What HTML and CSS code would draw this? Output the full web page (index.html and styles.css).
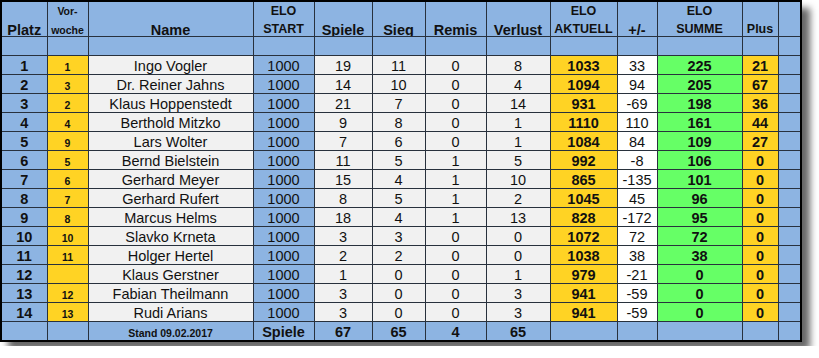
FILE: index.html
```html
<!DOCTYPE html>
<html lang="de">
<head>
<meta charset="utf-8">
<title>ELO Tabelle</title>
<link rel="stylesheet" href="styles.css">
</head>
<body>
<div class="frame">
<table class="elo">
<colgroup>
<col class="c-platz"><col class="c-vor"><col class="c-name"><col class="c-start"><col class="c-spiele"><col class="c-sieg"><col class="c-remis"><col class="c-verlust"><col class="c-akt"><col class="c-pm"><col class="c-summe"><col class="c-plus"><col class="c-extra">
</colgroup>
<thead>
<tr class="head">
<th class="b"><span class="l1"></span><span class="l2 big">Platz</span></th>
<th class="b"><span class="l1 tiny">Vor-</span><span class="l2 tiny">woche</span></th>
<th class="b"><span class="l1"></span><span class="l2 big">Name</span></th>
<th class="b"><span class="l1 small">ELO</span><span class="l2 small">START</span></th>
<th class="b"><span class="l1"></span><span class="l2 big">Spiele</span></th>
<th class="b"><span class="l1"></span><span class="l2 big">Sieg</span></th>
<th class="b"><span class="l1"></span><span class="l2 big">Remis</span></th>
<th class="b"><span class="l1"></span><span class="l2 big">Verlust</span></th>
<th class="b"><span class="l1 small">ELO</span><span class="l2 small">AKTUELL</span></th>
<th class="b"><span class="l1"></span><span class="l2 big">+/-</span></th>
<th class="b"><span class="l1 small">ELO</span><span class="l2 small">SUMME</span></th>
<th class="b"><span class="l1"></span><span class="l2 small">Plus</span></th>
<th class="b"><span class="l1"></span><span class="l2"></span></th>
</tr>
<tr class="spacer">
<td class="b"></td><td class="b"></td><td class="b"></td><td class="b"></td><td class="b"></td><td class="b"></td><td class="b"></td><td class="b"></td><td class="b"></td><td class="b"></td><td class="b"></td><td class="b"></td><td class="b"></td>
</tr>
</thead>
<tbody>
<tr><td class="b bold">1</td><td class="y vor">1</td><td class="g">Ingo Vogler</td><td class="b">1000</td><td class="g">19</td><td class="g">11</td><td class="g">0</td><td class="g">8</td><td class="y bold">1033</td><td class="w">33</td><td class="gr bold">225</td><td class="y bold">21</td><td class="b"></td></tr>
<tr><td class="b bold">2</td><td class="y vor">3</td><td class="g">Dr. Reiner Jahns</td><td class="b">1000</td><td class="g">14</td><td class="g">10</td><td class="g">0</td><td class="g">4</td><td class="y bold">1094</td><td class="w">94</td><td class="gr bold">205</td><td class="y bold">67</td><td class="b"></td></tr>
<tr><td class="b bold">3</td><td class="y vor">2</td><td class="g">Klaus Hoppenstedt</td><td class="b">1000</td><td class="g">21</td><td class="g">7</td><td class="g">0</td><td class="g">14</td><td class="y bold">931</td><td class="w">-69</td><td class="gr bold">198</td><td class="y bold">36</td><td class="b"></td></tr>
<tr><td class="b bold">4</td><td class="y vor">4</td><td class="g">Berthold Mitzko</td><td class="b">1000</td><td class="g">9</td><td class="g">8</td><td class="g">0</td><td class="g">1</td><td class="y bold">1110</td><td class="w">110</td><td class="gr bold">161</td><td class="y bold">44</td><td class="b"></td></tr>
<tr><td class="b bold">5</td><td class="y vor">9</td><td class="g">Lars Wolter</td><td class="b">1000</td><td class="g">7</td><td class="g">6</td><td class="g">0</td><td class="g">1</td><td class="y bold">1084</td><td class="w">84</td><td class="gr bold">109</td><td class="y bold">27</td><td class="b"></td></tr>
<tr><td class="b bold">6</td><td class="y vor">5</td><td class="g">Bernd Bielstein</td><td class="b">1000</td><td class="g">11</td><td class="g">5</td><td class="g">1</td><td class="g">5</td><td class="y bold">992</td><td class="w">-8</td><td class="gr bold">106</td><td class="y bold">0</td><td class="b"></td></tr>
<tr><td class="b bold">7</td><td class="y vor">6</td><td class="g">Gerhard Meyer</td><td class="b">1000</td><td class="g">15</td><td class="g">4</td><td class="g">1</td><td class="g">10</td><td class="y bold">865</td><td class="w">-135</td><td class="gr bold">101</td><td class="y bold">0</td><td class="b"></td></tr>
<tr><td class="b bold">8</td><td class="y vor">7</td><td class="g">Gerhard Rufert</td><td class="b">1000</td><td class="g">8</td><td class="g">5</td><td class="g">1</td><td class="g">2</td><td class="y bold">1045</td><td class="w">45</td><td class="gr bold">96</td><td class="y bold">0</td><td class="b"></td></tr>
<tr><td class="b bold">9</td><td class="y vor">8</td><td class="g">Marcus Helms</td><td class="b">1000</td><td class="g">18</td><td class="g">4</td><td class="g">1</td><td class="g">13</td><td class="y bold">828</td><td class="w">-172</td><td class="gr bold">95</td><td class="y bold">0</td><td class="b"></td></tr>
<tr><td class="b bold">10</td><td class="y vor">10</td><td class="g">Slavko Krneta</td><td class="b">1000</td><td class="g">3</td><td class="g">3</td><td class="g">0</td><td class="g">0</td><td class="y bold">1072</td><td class="w">72</td><td class="gr bold">72</td><td class="y bold">0</td><td class="b"></td></tr>
<tr><td class="b bold">11</td><td class="y vor">11</td><td class="g">Holger Hertel</td><td class="b">1000</td><td class="g">2</td><td class="g">2</td><td class="g">0</td><td class="g">0</td><td class="y bold">1038</td><td class="w">38</td><td class="gr bold">38</td><td class="y bold">0</td><td class="b"></td></tr>
<tr><td class="b bold">12</td><td class="y vor"></td><td class="g">Klaus Gerstner</td><td class="b">1000</td><td class="g">1</td><td class="g">0</td><td class="g">0</td><td class="g">1</td><td class="y bold">979</td><td class="w">-21</td><td class="gr bold">0</td><td class="y bold">0</td><td class="b"></td></tr>
<tr><td class="b bold">13</td><td class="y vor">12</td><td class="g">Fabian Theilmann</td><td class="b">1000</td><td class="g">3</td><td class="g">0</td><td class="g">0</td><td class="g">3</td><td class="y bold">941</td><td class="w">-59</td><td class="gr bold">0</td><td class="y bold">0</td><td class="b"></td></tr>
<tr><td class="b bold">14</td><td class="y vor">13</td><td class="g">Rudi Arians</td><td class="b">1000</td><td class="g">3</td><td class="g">0</td><td class="g">0</td><td class="g">3</td><td class="y bold">941</td><td class="w">-59</td><td class="gr bold">0</td><td class="y bold">0</td><td class="b"></td></tr>
</tbody>
<tfoot>
<tr class="foot"><td class="b"></td><td class="b"></td><td class="b stand">Stand 09.02.2017</td><td class="b bold">Spiele</td><td class="b bold">67</td><td class="b bold">65</td><td class="b bold">4</td><td class="b bold">65</td><td class="b"></td><td class="b"></td><td class="b"></td><td class="b"></td><td class="b"></td></tr>
</tfoot>
</table>
</div>
</body>
</html>
```
FILE: styles.css
```css
html, body {
  margin: 0;
  padding: 0;
  background: #ffffff;
}

body {
  font-family: "Liberation Sans", Arial, sans-serif;
  color: #111111;
}

.frame {
  display: inline-block;
  box-shadow: 8px 8px 7px rgba(0, 0, 0, 0.6);
}

.elo {
  border-collapse: collapse;
  table-layout: fixed;
  width: 800px;
  border: 2px solid #000000;
}

.c-platz { width: 46px; }
.c-vor { width: 41px; }
.c-name { width: 165px; }
.c-start { width: 61px; }
.c-spiele { width: 58px; }
.c-sieg { width: 53px; }
.c-remis { width: 61px; }
.c-verlust { width: 64px; }
.c-akt { width: 67px; }
.c-pm { width: 40px; }
.c-summe { width: 85px; }
.c-plus { width: 36px; }
.c-extra { width: 23px; }

.elo th,
.elo td {
  border: 1px solid #28313d;
  padding: 0;
  text-align: center;
  white-space: nowrap;
  overflow: hidden;
}

.elo td {
  font-size: 14.5px;
  height: 15.7px;
  line-height: 16px;
  padding: 2px 0 0 0;
  vertical-align: baseline;
}

.elo .head th {
  height: 34px;
  font-weight: bold;
  vertical-align: top;
}

.l1 {
  display: block;
  height: 18px;
  line-height: 18px;
}

.l2 {
  display: block;
  height: 16px;
  line-height: 19px;
}

.big { font-size: 14.5px; }
.small { font-size: 12.5px; }
.tiny { font-size: 10.5px; }
.l2.big { line-height: 20px; }
.l2.small { line-height: 19px; }
.l2.tiny { line-height: 21px; }

.elo .spacer td {
  height: 18px;
  padding: 0;
}

.elo .foot td {
  height: 15px;
}

.elo td.bold { font-weight: bold; }

.elo td.vor {
  font-weight: bold;
  font-size: 10.5px;
  line-height: 12px;
}

.elo td.stand {
  font-weight: bold;
  font-size: 10.5px;
  line-height: 12px;
}

.b { background: #8db4e2; }
.y { background: #ffd324; }
.g { background: #f1f1f1; }
.w { background: #ffffff; }
.gr { background: #66ff66; }
```
